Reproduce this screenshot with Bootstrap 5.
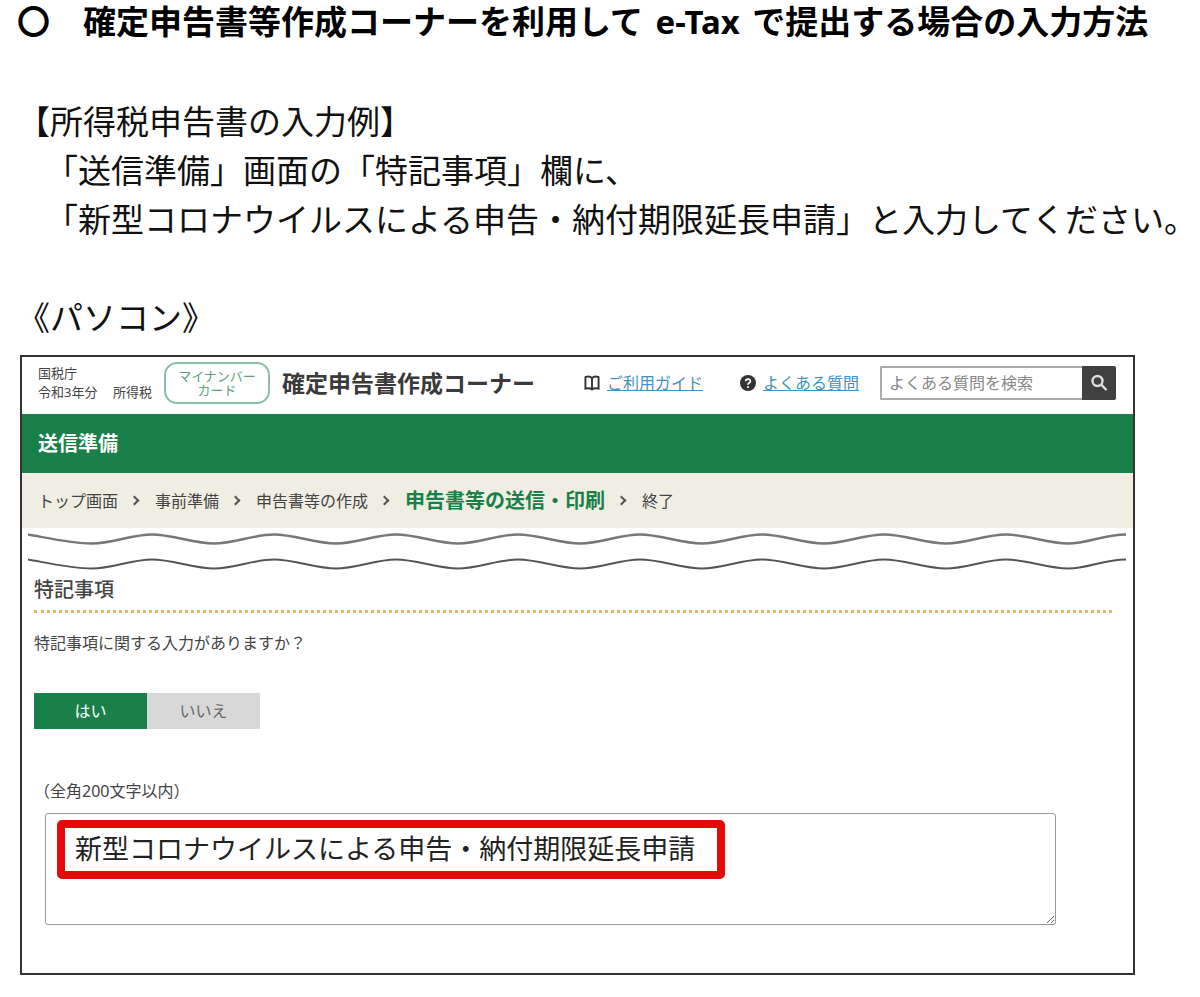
<!DOCTYPE html>
<html lang="ja">
<head>
<meta charset="utf-8">
<meta name="viewport" content="width=device-width, initial-scale=1">
<title>確定申告書等作成コーナー 入力方法</title>
<link href="https://cdn.jsdelivr.net/npm/bootstrap@5.3.0/dist/css/bootstrap.min.css" rel="stylesheet">
<style>
  :root { --tax-green: #1a804a; }
  body { font-family: "Noto Sans", "Noto Sans CJK JP", sans-serif; color: #111; background: #fff; font-size: 16px; }
  .guide { padding: 0 17px; white-space: nowrap; }
  .guide h1 { font-size: 33px; font-weight: 700; line-height: 44px; margin-bottom: 53px; color: #000; }
  .guide .latin { margin: 0 4px; }
  .guide p { font-size: 33px; line-height: 49px; margin: 0; }
  .guide .quoted { padding-left: 28px; }
  .guide .device { margin-top: 49px; }

  .screen { margin: 13px 65px 20px 20px; border: 2px solid #333; color: #444; }
  .site-head { height: 57px; padding: 0 17px 5px 16px; white-space: nowrap; }
  .org { width: 126px; font-size: 13px; line-height: 19px; }
  .mynumber { width: 106px; height: 42px; border: 2px solid #8ac2a5; border-radius: 13px; color: #5b9f80; font-size: 13px; line-height: 14px; }
  .site-name { font-size: 23px; font-weight: 700; line-height: 30px; margin: 0 0 0 12px; color: #3a3a3a; }
  .help-links { gap: 37px; line-height: 24px; }
  .help-links a { color: #3f92c4; margin-left: 7px; }
  .faq-search { width: 236px; height: 34px; margin-left: 21px; }
  .faq-search .form-control { border: 2px solid #aaa; border-right: 0; border-radius: 2px 0 0 2px; padding: 0 7px; font-size: 16px; }
  .faq-search .form-control::placeholder { color: #888; }
  .faq-search .btn { width: 34px; background: #404040; color: #ddd; border-radius: 0 2px 2px 0; }
  .page-bar { height: 59px; padding: 0 16px; background: var(--tax-green); color: #fff; }
  .page-bar h3 { font-size: 20px; font-weight: 700; margin: 0; }
  .steps { height: 55px; padding: 0 16px; background: #f0eee3; white-space: nowrap; }
  .steps li { display: flex; align-items: center; line-height: 24px; }
  .steps .current { color: var(--tax-green); font-size: 20px; font-weight: 700; }
  .steps li + li::before { content: ""; width: 7px; height: 7px; margin: 0 17px 0 13px; border: solid #555; border-width: 2px 2px 0 0; transform: rotate(45deg); }
  .tear { padding: 5px 7px 0 6px; }
  .tear svg { display: block; width: 100%; height: 12px; margin-bottom: 13px; }
  .entry { padding: 0 21px 48px 12px; }
  .entry h4 { font-size: 20px; line-height: 28px; margin: -7px 0 6px; color: #444; }
  .dots { border-top: 3px dotted #e3b866; }
  .question { line-height: 24px; margin: 18px 0 38px; }
  .yesno .btn { flex: 0 0 113px; height: 36px; padding: 0; border: 0; border-radius: 0; font-size: 16px; }
  .yesno .yes { background: var(--tax-green); color: #fff; }
  .yesno .no { background: #d8d8d8; color: #666; }
  .limit { display: block; line-height: 24px; margin: 50px 0 10px 0; }
  .note { position: relative; margin: 0 56px 0 11px; }
  .note textarea { display: block; height: 112px; border: 1px solid #999; border-radius: 3px; padding: 15px 29px; font-size: 27px; line-height: 40px; color: #222; white-space: nowrap; overflow: hidden; }
  .frame-red { position: absolute; left: 12px; top: 7px; width: 668px; height: 59px; border: 8px solid #e60a0a; border-radius: 5px; pointer-events: none; }
</style>
</head>
<body>
<main>
  <section class="guide">
    <h1>〇　確定申告書等作成コーナーを利用して <span class="latin">e-Tax</span> で提出する場合の入力方法</h1>
    <p>【所得税申告書の入力例】</p>
    <p class="quoted">「送信準備」画面の「特記事項」欄に、</p>
    <p class="quoted">「新型コロナウイルスによる申告・納付期限延長申請」と入力してください。</p>
    <p class="device">《パソコン》</p>
  </section>

  <section class="screen">
    <header class="site-head d-flex align-items-center">
      <div class="org flex-shrink-0">
        <div>国税庁</div>
        <div class="d-flex"><span>令和3年分</span><span class="ms-auto me-2 pe-1">所得税</span></div>
      </div>
      <div class="mynumber flex-shrink-0 d-flex flex-column align-items-center justify-content-center"><span>マイナンバー</span><span>カード</span></div>
      <h2 class="site-name">確定申告書作成コーナー</h2>
      <nav class="help-links d-flex ms-auto">
        <span class="d-flex align-items-center">
          <svg width="16" height="16" viewBox="0 0 17 17" fill="none" stroke="#333" stroke-width="2" aria-hidden="true"><path d="M8.500 3.500C7 1.500 3.500 1.500 1.500 2.200V14.500C4 13.800 6.500 13.800 8.500 15.300C10.500 13.800 13 13.800 15.500 14.500V2.200C13.500 1.500 10 1.500 8.500 3.500V15"/></svg>
          <a href="#">ご利用ガイド</a>
        </span>
        <span class="d-flex align-items-center">
          <svg width="16" height="16" viewBox="0 0 16 16" aria-hidden="true"><circle cx="8" cy="8" r="8" fill="#333"/><path d="M5.700 6.300C5.700 3.300 10.500 3.400 10.400 6.200C10.300 7.800 8 7.800 8 9.700" fill="none" stroke="#fff" stroke-width="1.700"/><circle cx="8" cy="12" r="1.100" fill="#fff"/></svg>
          <a href="#">よくある質問</a>
        </span>
      </nav>
      <form class="faq-search input-group flex-nowrap flex-shrink-0">
        <input type="text" class="form-control" placeholder="よくある質問を検索" aria-label="よくある質問を検索">
        <button type="button" class="btn p-0 border-0 d-flex align-items-center justify-content-center" aria-label="検索">
          <svg width="18" height="18" viewBox="0 0 18 18" fill="none" stroke="currentColor" stroke-width="2.400"><circle cx="7.500" cy="7" r="5"/><path d="M11.200 10.700L16.500 16"/></svg>
        </button>
      </form>
    </header>

    <div class="page-bar d-flex align-items-center"><h3>送信準備</h3></div>

    <ol class="steps list-unstyled d-flex align-items-center m-0">
      <li>トップ画面</li>
      <li>事前準備</li>
      <li>申告書等の作成</li>
      <li><span class="current">申告書等の送信・印刷</span></li>
      <li>終了</li>
    </ol>

    <div class="tear" aria-hidden="true">
      <svg viewBox="0 0 1098 12" preserveAspectRatio="none" fill="none" stroke="#777" stroke-width="2.500"><path id="wave" d="M0 1.500C20 5 44 10.500 64 10.500S104 1.500 124 1.500S166 10.500 186 10.500S226 1.500 246 1.500S288 10.500 308 10.500S348 1.500 368 1.500S410 10.500 430 10.500S470 1.500 490 1.500S532 10.500 552 10.500S592 1.500 612 1.500S654 10.500 674 10.500S714 1.500 734 1.500S776 10.500 796 10.500S836 1.500 856 1.500S898 10.500 918 10.500S958 1.500 978 1.500S1020 10.500 1040 10.500S1075 1.500 1098 1.500"/></svg>
      <svg viewBox="0 0 1098 12" preserveAspectRatio="none" fill="none" stroke="#555" stroke-width="2"><use href="#wave"/></svg>
    </div>

    <div class="entry">
      <h4>特記事項</h4>
      <div class="dots"></div>
      <p class="question">特記事項に関する入力がありますか？</p>
      <div class="yesno d-flex" role="group" aria-label="特記事項に関する入力">
        <button type="button" class="btn yes">はい</button>
        <button type="button" class="btn no">いいえ</button>
      </div>
      <label class="limit" for="remarks">（全角200文字以内）</label>
      <div class="note">
        <textarea id="remarks" class="form-control">新型コロナウイルスによる申告・納付期限延長申請</textarea>
        <div class="frame-red"></div>
      </div>
    </div>
  </section>
</main>
<script src="https://cdn.jsdelivr.net/npm/bootstrap@5.3.0/dist/js/bootstrap.bundle.min.js"></script>
</body>
</html>
